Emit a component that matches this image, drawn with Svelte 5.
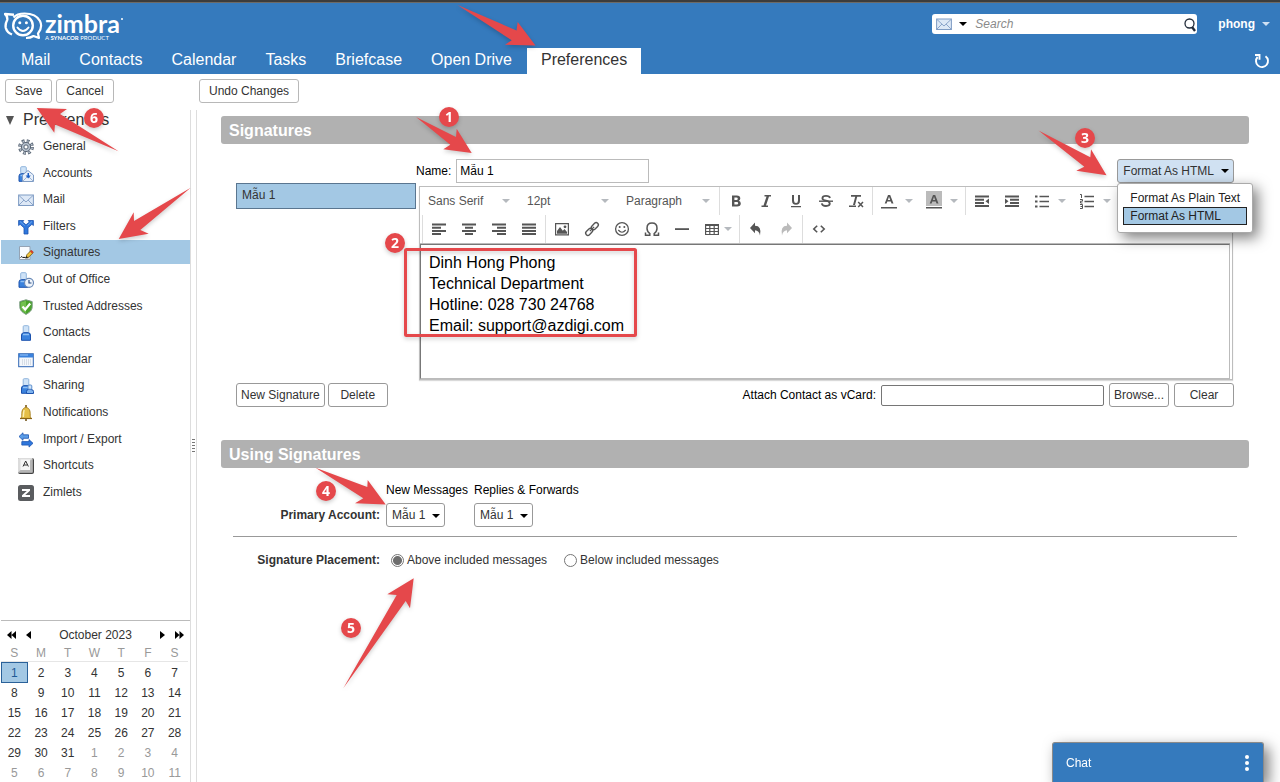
<script>
  const tabs = ['Mail', 'Contacts', 'Calendar', 'Tasks', 'Briefcase', 'Open Drive', 'Preferences'];

  const person = (x = 0) =>
    `<g transform="translate(${x} 0)"><rect x="4.700" y=".7" width="5.600" height="6.800" rx="1" fill="#cfe3f7" stroke="#8fb4dc"/><path d="M3 15.300V10Q3 7.700 5.500 7.700h4Q12 7.700 12 10v5.300z" fill="#3a82dd" stroke="#1c52ad"/><path d="M4.500 9.500h6" stroke="#8fc0f5" stroke-width="1.500"/></g>`;
  const envelope =
    '<rect x=".6" y="3" width="14.800" height="10.500" fill="#dde8f6" stroke="#7f9cc4"/><path d="M1 3.500l7 6.500 7-6.500M1 13l5-5M15 13l-5-5" fill="none" stroke="#8ba5ca"/>';

  const icons = {
    General:
      '<circle cx="8" cy="8" r="6.300" fill="none" stroke="#5a6675" stroke-width="3.200" stroke-dasharray="2.700 2.248"/><circle cx="8" cy="8" r="4.600" fill="#b4bfcc" stroke="#5a6675"/><circle cx="8" cy="8" r="6.200" fill="none" stroke="#b9c3cf" stroke-width="1.600" stroke-dasharray="1.300 3.570" stroke-dashoffset="-.7"/><circle cx="8" cy="8" r="2.100" fill="#fff" stroke="#5a6675"/>',
    Accounts:
      person(-2) +
      '<path d="M4.500 15.500V9L10 4.500 15.500 9v6.500z" fill="#e8f0fa" stroke="#7f9cc4"/><path d="M5 15l4-4M15 15l-4-4" stroke="#9db4d4"/><path d="M9.500 7h1.500v2.500h1.800L10.200 12.500 7.600 9.500h1.900z" fill="#1c5fc4"/>',
    Mail: envelope,
    Filters:
      '<path d="M.6 1.500h5.200L4.600 3 8 5.800 11.400 3l-1.200-1.500h5.200v5L13.900 5.300 10 8.800V15H6V8.800L2.100 5.300.6 6.500z" fill="#2f77dc" stroke="#1d54b0" stroke-width=".8" stroke-linejoin="round"/><path d="M2 2.500l4.500 4M14 2.500L9.500 6.500" stroke="#7db2ee" stroke-width=".8"/>',
    Signatures:
      '<path d="M1.500 1.500h10.500v13H1.500z" fill="#f8fbff" stroke="#94a3b4"/><path d="M2.500 12.500l1.300-1L5 12.800l1-.8 1 .8h3.500" fill="none" stroke="#111"/><path d="M8 12.800l.8-3L13 5.500l2.200 2.200-4.400 4.300z" fill="#f3c53b" stroke="#6b5310" stroke-width=".8"/><path d="M12 6.500l2 2 1.500-1.400-2-2z" fill="#d33c2b"/><path d="M7.800 13l.6-2 1.400 1.400z" fill="#111"/>',
    'Out of Office':
      person(-2) +
      '<circle cx="11" cy="10.800" r="4.500" fill="#f0f5fb" stroke="#6c8cb8" stroke-width="1.200"/><path d="M11 8v3h2.500" fill="none" stroke="#2b4f86" stroke-width="1.200"/>',
    'Trusted Addresses':
      '<path d="M8 .8l6.200 1.800v5c0 3.800-2.800 6-6.200 7.800-3.400-1.800-6.200-4-6.200-7.800v-5z" fill="#4aa32c" stroke="#7b9a84"/><path d="M8 1.800v12.500c-2.800-1.600-5.200-3.500-5.200-6.700V3.400z" fill="#72c04f"/><path d="M4.500 7.500l2.700 3 5-6" fill="none" stroke="#fff" stroke-width="2.200"/>',
    Contacts: person(0.5),
    Calendar:
      '<rect x=".7" y="1.700" width="14.600" height="13" fill="#f4f7fb" stroke="#2f66b5"/><path d="M1 2h14v3.500H1z" fill="#3a82dd"/><path d="M2 3h8" stroke="#9cc6f7"/><path d="M4 8h10M4 10h10M4 12h10" stroke="#b9c4d2" stroke-dasharray="1 1"/>',
    Sharing:
      person(0.5) +
      '<path d="M8.500 15.500v-2q0-2 2-2h2.500q2.500 0 2.500 2v2z" fill="#7db2ee" stroke="#1c52ad"/><rect x="10" y="7" width="3.800" height="4.200" rx="1" fill="#cfe3f7" stroke="#5d90cf"/>',
    Notifications:
      '<path d="M8 0v2.500" stroke="#7d5a13" stroke-width="1.600"/><path d="M2.500 13.500c1.500-1.200 1.300-2.500 1.300-5C3.800 5 5.500 2.500 8 2.500S12.200 5 12.200 8.500c0 2.500-.2 3.800 1.300 5z" fill="#e5bf48" stroke="#a37b1c" stroke-width=".9"/><path d="M6.200 5c-.7 1.500-.7 4-.9 7" stroke="#fbeeb0" fill="none" stroke-width="1.500"/><path d="M2 13.500h12" stroke="#8a6414" stroke-width="1.200"/><path d="M7 15h2" stroke="#6b4c0e" stroke-width="1.600"/>',
    'Import / Export':
      '<path d="M1 4.500L5 .8v2h5.500v3.500H5v2z" fill="#5b9de8" stroke="#1d54b0" stroke-width=".8"/><path d="M15 11.300L11 7.600v2H3.800v3.500H11v2z" fill="#2f77dc" stroke="#1d54b0" stroke-width=".8"/>',
    Shortcuts:
      '<rect width="16" height="16" rx="2" fill="#444"/><path d="M1 0h13.500v14.500H0V1z" fill="#dcdcdc"/><path d="M0 14.500L2.500 12h9.500V2.500L14.500 1v13.500z" fill="#b5b5b5"/><rect x="2.500" y="1.500" width="9.500" height="10.500" fill="#f7f7f7"/><path d="M5 8.500L7.700 3l2.700 5.500M6 7h3.400" fill="none" stroke="#333"/>',
    Zimlets:
      '<rect width="16" height="16" rx="2.500" fill="#5a5c5f"/><path d="M4 4h8v1.800L7.200 10H12v2H4v-1.800L8.800 6H4z" fill="#fff"/>'
  };

  const tool = {
    bold: '<path fill-rule="evenodd" d="M4 2.500h4.800q3.500 0 3.500 3 0 1.600-1.400 2.300 1.900.6 1.900 2.700 0 3-3.700 3H4zM6.400 4.500v2.400h2q1.400 0 1.400-1.200T8.400 4.500zM6.400 8.900v2.700h2.300q1.500 0 1.500-1.400T8.700 8.900z"/>',
    italic: '<path d="M6.500 2H13v1.400h-2L8 12.600h2V14H3.500v-1.400h2l3-9.200h-2z"/>',
    underline: '<path d="M4 2h2v5.500q0 2.500 2 2.500t2-2.500V2h2v5.500Q12 11.800 8 11.800T4 7.500zM3 13h10v1.300H3z"/>',
    strike: '<path d="M1 7.500h14v1.400H1z"/><path d="M12 5Q11.500 2.900 8 2.900T4.400 5.200Q4.400 7 8 7.600t3.800 3Q11.800 13 8 13t-4.200-2.600" fill="none" stroke="currentColor" stroke-width="1.800"/>',
    clear: '<path d="M3 2h10v1.700H9.200L7 12H5l2.200-8.300H3zM1 12.600h7V14H1z"/><path d="M10.200 9l4.800 5M15 9l-4.800 5" stroke="currentColor" stroke-width="1.500"/>',
    color: '<path fill-rule="evenodd" d="M7 2h2.200l3.300 8.500h-2L9.800 8.600H6.300l-.7 1.900H3.700zM6.900 7h2.300L8 3.800zM0 14h16v1.600H0z"/>',
    back: '<path d="M0-2h16v15H0z" fill="#bbb"/><path fill-rule="evenodd" d="M7 2h2.200l3.300 8.500h-2L9.800 8.600H6.300l-.7 1.900H3.700zM6.900 7h2.300L8 3.800zM0 14h16v1.600H0z"/>',
    outdent: '<path d="M1 2.500h14v2H1zM1 5.700h9v2H1zM1 8.900h9v2H1zM1 12.100h14v2H1zM15 5.500v5.600L11.500 8.300z"/>',
    indent: '<path d="M1 2.500h14v2H1zM6 5.700h9v2H6zM6 8.900h9v2H6zM1 12.100h14v2H1zM1 5.500v5.600l3.500-2.800z"/>',
    bullets: '<path d="M1 2.500h2.500v2H1zM1 7.500h2.500v2H1zM1 12.500h2.500v2H1zM5.500 2.700H15v1.600H5.500zM5.500 7.700H15v1.600H5.500zM5.500 12.700H15v1.600H5.500z"/>',
    numbers: '<path d="M5.500 2.700H15v1.600H5.500zM5.500 7.700H15v1.600H5.500zM5.500 12.700H15v1.600H5.500z"/><path d="M1 1.500h1.500V5M1 6.500h2.500v1.700H1.500V10h2M1 11.500h2.500v4H1M1.500 13.500h2" fill="none" stroke="currentColor"/>',
    left: '<path d="M1 2.500h14v2H1zM1 5.700h9v2H1zM1 8.900h14v2H1zM1 12.100h9v2H1z"/>',
    center: '<path d="M1 2.500h14v2H1zM4 5.700h8v2H4zM1 8.900h14v2H1zM4 12.100h8v2H4z"/>',
    right: '<path d="M1 2.500h14v2H1zM6 5.700h9v2H6zM1 8.900h14v2H1zM6 12.100h9v2H6z"/>',
    justify: '<path d="M1 2.500h14v2H1zM1 5.700h14v2H1zM1 8.900h14v2H1zM1 12.100h14v2H1z"/>',
    image: '<path fill-rule="evenodd" d="M1 2h14v12.500H1zM2.200 3.200v10h11.600v-10z"/><path d="M3 12.800V10l3-4 2.800 3.800L10.500 8l2.500 3v1.800z"/><circle cx="11" cy="5.800" r="1.400"/>',
    link: '<g transform="rotate(-45 8 8)" fill="none" stroke="currentColor" stroke-width="1.400"><rect x="0" y="5.800" width="8" height="4.400" rx="2.200"/><rect x="8" y="5.800" width="8" height="4.400" rx="2.200"/><path d="M5 8h6"/></g>',
    smile: '<circle cx="8" cy="8" r="6.400" fill="none" stroke="currentColor" stroke-width="1.300"/><circle cx="5.700" cy="6" r="1"/><circle cx="10.300" cy="6" r="1"/><path d="M4.300 9q3.700 4.500 7.400 0" fill="none" stroke="currentColor" stroke-width="1.200"/>',
    omega: '<path d="M1.500 11.500v2.700h4.300v-1.700Q3 10.500 3 7.200 3 2 8 2t5 5.200q0 3.300-2.800 5.300v1.700h4.300v-2.700" fill="none" stroke="currentColor" stroke-width="1.500"/>',
    rule: '<path d="M1 7.200h14V9H1z"/>',
    table: '<path fill-rule="evenodd" d="M1 3h14v11H1zM2.200 5v2h3V5zM6.400 5v2h3.200V5zM10.800 5v2h3V5zM2.200 8v2h3V8zM6.400 8v2h3.200V8zM10.800 8v2h3V8zM2.200 11v2h3v-2zM6.400 11v2h3.200v-2zM10.800 11v2h3v-2z"/>',
    undo: '<path d="M7 1.500v3.200q7 0 5 9.800-.8-5-5-5.200v3L2 7z"/>',
    redo: '<path d="M9 1.500v3.200q-7 0-5 9.800.8-5 5-5.200v3L14 7z"/>',
    code: '<path d="M6.200 4.700L2.800 8l3.400 3.300M9.800 4.700L13.200 8l-3.400 3.300" fill="none" stroke="currentColor" stroke-width="1.600"/>'
  };

  const fontSelects = [
    { label: 'Font', value: 'Sans Serif', wide: false },
    { label: 'Size', value: '12pt', wide: false },
    { label: 'Block', value: 'Paragraph', wide: true }
  ];
  const rowOne = [
    [['bold', 'Bold'], ['italic', 'Italic'], ['underline', 'Underline'], ['strike', 'Strikethrough'], ['clear', 'Clear formatting']],
    [['color', 'Text color', 'menu'], ['back', 'Background color', 'menu']],
    [['outdent', 'Decrease indent'], ['indent', 'Increase indent'], ['bullets', 'Bullet list', 'menu'], ['numbers', 'Numbered list', 'menu']]
  ];
  const rowTwo = [
    [['left', 'Align left'], ['center', 'Align center'], ['right', 'Align right'], ['justify', 'Justify']],
    [['image', 'Insert image'], ['link', 'Insert link'], ['smile', 'Emoticons'], ['omega', 'Special character'], ['rule', 'Horizontal line'], ['table', 'Table', 'tight']],
    [['undo', 'Undo'], ['redo', 'Redo']],
    [['code', 'Source code']]
  ];

  const weekdays = ['S', 'M', 'T', 'W', 'T', 'F', 'S'];
  const weeks = Array.from({ length: 6 }, (_, w) =>
    Array.from({ length: 7 }, (_, d) => {
      const n = w * 7 + d + 1;
      return { day: n > 31 ? n - 31 : n, other: n > 31 };
    })
  );

  const arrows = [
    '457.5,5 516.500,30.500 517.700,22 535.500,45.500 505,44.700 511.700,40.300',
    '416,117 456,137 456.700,128.700 471.700,153 443.300,149.300 450.300,144.700',
    '36.700,108 67,109 60,114 118.500,151.300 55,124.500 54.300,132.700',
    '118.700,239 133.700,212.300 134,221 190.700,187.700 140.300,230 148.700,233.700',
    '1038.500,130.500 1090.300,157.300 1091,149.300 1106.500,175.300 1076.300,170.700 1084.300,166.700',
    '315.500,467.700 367.300,487 367.700,480 385.700,504.500 355,503.300 363.300,498.300',
    '343.300,688.300 396.700,595 387.300,594.300 413.700,578.300 410,608.300 405.700,601'
  ];
  const badges = [
    [449, 117], [395, 243], [1085, 138], [326, 491], [351, 628], [94, 118]
  ];

  let placement = $state('above');
</script>

{#snippet toolbarGroup(items)}
  <div class="group">
    {#each items as [id, title, menu]}
      <button class="tool" class:dim={id === 'redo'} aria-label={title}>
        <svg width="16" height="16" viewBox="0 0 16 16" fill="currentColor" overflow="visible">{@html tool[id]}</svg>
      </button>
      {#if menu}
        <button class="drop" class:tight={menu === 'tight'} aria-label="{title} options"><span class="caret pale"></span></button>
      {/if}
    {/each}
  </div>
{/snippet}

<div class="app">
  <header>
    <div class="brand-row">
      <a class="logo" href="#home" aria-label="Zimbra">
        <svg width="39" height="28" viewBox="0 0 39 28" fill="none" stroke="#fff">
          <path d="M10 2.800L1 2Q3.800 4.500 3.200 8 1 12 1.800 16q1.200 4.500 6.200 6.500" stroke-width="2.400" stroke-linejoin="round" />
          <path d="M9.500 5.500Q13 1.500 20.500 1.500 32 1.500 36 9q3 6.500-2 12.500l1 4.500-5.500-2Q26.500 26 22 26" stroke-width="2.200" stroke-linejoin="round" />
          <circle cx="19" cy="13.500" r="9.800" stroke-width="2.400" />
          <path d="M13.500 15.500q5.500 7 11 0" stroke-width="2" stroke-linecap="round" />
          <circle cx="15.800" cy="10.800" r="1.500" fill="#fff" stroke="none" />
          <circle cx="22.400" cy="10.800" r="1.500" fill="#fff" stroke="none" />
        </svg>
        <span class="wordmark"><b>zimbra</b><small>A <strong>SYNACOR</strong> PRODUCT</small></span>
        <span class="mark"></span>
      </a>
      <div class="account">
        <form class="search" onsubmit={(e) => e.preventDefault()}>
          <button type="button" class="scope" aria-label="Search in mail">
            <svg width="16" height="16" viewBox="0 0 16 16">{@html envelope}</svg>
            <span class="caret"></span>
          </button>
          <input aria-label="Search" placeholder="Search" />
          <button class="go" aria-label="Run search">
            <svg width="14" height="14" viewBox="0 0 14 14" fill="none" stroke="#222c3a"><circle cx="6.500" cy="5.500" r="4.500" stroke-width="1.300" /><path d="M9 9l3 4" stroke-width="2.400" /></svg>
          </button>
        </form>
        <button class="user">phong <span class="caret light"></span></button>
      </div>
    </div>
    <div class="nav-row">
      <nav>
        {#each tabs as tab}
          <a href="#{tab}" class:active={tab === 'Preferences'}>{tab}</a>
        {/each}
      </nav>
      <button class="refresh" aria-label="Refresh">
        <svg width="16" height="16" viewBox="0 0 16 16" fill="none" stroke="#fff" stroke-width="1.900"><path d="M11.500 3.200A6 6 0 1 1 3.600 4" /><path d="M1 2h4.500v4.800" /></svg>
      </button>
    </div>
  </header>

  <div class="actions">
    <div class="save-pair"><button class="btn">Save</button><button class="btn">Cancel</button></div>
    <button class="btn">Undo Changes</button>
  </div>

  <div class="body">
    <aside>
      <section class="tree">
        <h2><span class="twisty"></span>Preferences</h2>
        <ul>
          {#each Object.keys(icons) as name}
            <li>
              <a href="#{name}" class:selected={name === 'Signatures'}>
                <svg width="16" height="16" viewBox="0 0 16 16">{@html icons[name]}</svg>{name}
              </a>
            </li>
          {/each}
        </ul>
      </section>
      <section class="calendar">
        <div class="month">
          <button aria-label="Previous year"><svg width="9" height="8" viewBox="0 0 9 8"><path d="M4.500 0v8L0 4zM9 0v8L4.500 4z" /></svg></button>
          <button aria-label="Previous month"><svg width="5" height="8" viewBox="0 0 5 8"><path d="M5 0v8L0 4z" /></svg></button>
          <span>October 2023</span>
          <button aria-label="Next month"><svg width="5" height="8" viewBox="0 0 5 8"><path d="M0 0v8l5-4z" /></svg></button>
          <button aria-label="Next year"><svg width="9" height="8" viewBox="0 0 9 8"><path d="M0 0v8l4.500-4zM4.500 0v8L9 4z" /></svg></button>
        </div>
        <table>
          <thead><tr>{#each weekdays as d}<th>{d}</th>{/each}</tr></thead>
          <tbody>
            {#each weeks as week, w}
              <tr>{#each week as c, d}<td class:other={c.other} class:today={w === 0 && d === 0}>{c.day}</td>{/each}</tr>
            {/each}
          </tbody>
        </table>
      </section>
    </aside>

    <div class="splitter"><span></span></div>

    <main>
      <h1>Signatures</h1>
      <div class="signatures">
        <div class="name-row">
          <label for="sig-name">Name:</label>
          <input id="sig-name" value="Mẫu 1" />
          <div class="format">
            <button class="btn open" aria-haspopup="menu" aria-expanded="true">Format As HTML <span class="caret"></span></button>
            <div class="menu" role="menu">
              <button role="menuitem">Format As Plain Text</button>
              <button role="menuitem" class="current">Format As HTML</button>
            </div>
          </div>
        </div>
        <div class="edit-row">
          <ul class="sig-list"><li><button>Mẫu 1</button></li></ul>
          <div class="editor">
            <div class="tools">
              <div class="tool-row">
                <div class="group first">
                  {#each fontSelects as s}
                    <span class="pick" class:wide={s.wide}>
                      <select aria-label={s.label}><option>{s.value}</option></select>
                      <span class="caret pale"></span>
                    </span>
                  {/each}
                </div>
                {#each rowOne as items}{@render toolbarGroup(items)}{/each}
              </div>
              <div class="tool-row second">
                {#each rowTwo as items}{@render toolbarGroup(items)}{/each}
              </div>
            </div>
            <div class="content" contenteditable="true" role="textbox" tabindex="0" aria-label="Signature text" spellcheck="false">
              <div>Dinh Hong Phong</div>
              <div>Technical Department</div>
              <div>Hotline: 028 730 24768</div>
              <div>Email: support@azdigi.com</div>
            </div>
          </div>
        </div>
        <div class="foot-row">
          <button class="btn snug">New Signature</button>
          <button class="btn snug">Delete</button>
          <div class="vcard">
            <label for="vcard">Attach Contact as vCard:</label>
            <input id="vcard" />
            <button class="btn snug">Browse...</button>
            <button class="btn snug">Clear</button>
          </div>
        </div>
      </div>

      <h1>Using Signatures</h1>
      <div class="using">
        <div class="using-grid">
          <span></span>
          <label for="new-msg">New Messages</label>
          <label for="reply-msg">Replies &amp; Forwards</label>
          <strong>Primary Account:</strong>
          <span class="choose"><select id="new-msg"><option>Mẫu 1</option></select><span class="caret"></span></span>
          <span class="choose"><select id="reply-msg"><option>Mẫu 1</option></select><span class="caret"></span></span>
        </div>
        <hr />
        <div class="placement">
          <strong>Signature Placement:</strong>
          <label><input type="radio" name="placement" value="above" bind:group={placement} />Above included messages</label>
          <label><input type="radio" name="placement" value="below" bind:group={placement} />Below included messages</label>
        </div>
      </div>
    </main>
  </div>

  <button class="chat">
    <span>Chat</span>
    <svg width="6" height="16" viewBox="0 0 6 16" fill="#fff"><circle cx="3" cy="2" r="2" /><circle cx="3" cy="8" r="2" /><circle cx="3" cy="14" r="2" /></svg>
  </button>

  <svg class="callouts" aria-hidden="true">
    <rect x="405.500" y="249.500" width="230" height="86" rx="1" fill="none" stroke="#e5484b" stroke-width="3" />
    {#each arrows as points}
      <polygon {points} fill="#e5484b" />
    {/each}
    {#each badges as [x, y], i}
      <circle cx={x} cy={y} r="10" fill="#e5484b" />
      <text {x} y={y + 5} text-anchor="middle">{i + 1}</text>
    {/each}
  </svg>
</div>

<style>
  :global(body) { margin: 0; }
  .app {
    position: relative;
    display: flex;
    flex-direction: column;
    min-height: 100vh;
    background: #fff;
    color: #333;
    font: 12px/16px "Liberation Sans", Arial, sans-serif;
  }
  .app :where(button, input, select) {
    margin: 0;
    box-sizing: border-box;
    font: inherit;
    color: inherit;
  }
  .app :where(button) { padding: 0; border: 0; background: none; white-space: nowrap; }
  .app :where(svg) { display: block; flex: none; }
  ul { margin: 0; padding: 0; list-style: none; }
  a { color: inherit; text-decoration: none; }

  .caret {
    flex: none;
    width: 0;
    height: 0;
    border: 4px solid transparent;
    border-top: 4px solid #000;
    border-bottom: 0;
  }
  .caret.light { border-top-color: #cfe0f3; }
  .caret.pale { border-top-color: #b5b9be; }

  header { background: #357abd; border-top: 2px solid #3c3c3c; box-shadow: inset 0 1px #6c6a66; }
  .brand-row { display: flex; align-items: flex-start; justify-content: space-between; height: 46px; }
  .logo { display: flex; gap: 2px; padding: 10px 0 0 4px; color: #fff; }
  .wordmark { display: flex; flex-direction: column; font-family: Lato, sans-serif; }
  .wordmark b { font-size: 25px; line-height: 22px; font-weight: 700; }
  .wordmark small { padding-top: 1px; font-size: 6px; line-height: 6px; }
  .mark { align-self: flex-start; width: 2px; height: 2px; margin: 6px 0 0 -1px; border-radius: 50%; background: #fff; }
  .account { display: flex; align-items: center; padding: 12px 10px 0 0; }
  .search { display: flex; align-items: center; width: 265px; height: 20px; background: #fff; border-radius: 3px; }
  .search .scope { display: flex; align-items: center; gap: 7px; padding-left: 4px; }
  .search input { flex: 1; min-width: 0; height: 18px; padding: 0 8px; border: 0; outline: 0; background: none; font-style: italic; }
  .search input::placeholder { color: #8a8a8a; opacity: 1; }
  .go { padding: 1px 0 0; }
  .user { display: flex; align-items: center; gap: 7px; padding-left: 21px; color: #fff; font-weight: bold; }
  .nav-row { display: flex; align-items: stretch; justify-content: space-between; height: 26px; padding: 0 10px 0 7px; }
  nav { display: flex; gap: 1px; font-size: 16px; line-height: 24px; color: #fff; }
  nav a { padding: 0 14px 2px; white-space: nowrap; }
  nav a.active { background: #fff; color: #333; }

  .actions { display: flex; padding: 5px 5px 7px; }
  .save-pair { display: flex; gap: 4px; width: 194px; }
  .btn {
    height: 24px;
    padding: 0 9px;
    border: 1px solid #b8b8b8;
    border-radius: 3px;
    background: #fff;
    color: #333;
  }
  .btn.snug { min-width: 60px; padding: 0 4px; border-color: #999; }

  .body { display: flex; flex: 1; }
  aside { display: flex; flex-direction: column; justify-content: space-between; flex: none; width: 190px; }
  .tree h2 { display: flex; align-items: center; gap: 9px; margin: 0 0 4px; padding-left: 6px; font-size: 16px; line-height: 20px; font-weight: normal; }
  .twisty { border: 4px solid transparent; border-top: 9px solid #555; border-bottom: 0; }
  .tree ul { display: flex; flex-direction: column; justify-content: space-between; height: 370px; }
  .tree li { padding-left: 1px; }
  .tree a { display: flex; align-items: center; gap: 9px; height: 24px; padding-left: 17px; }
  .tree a svg { margin-top: 2px; }
  .tree a.selected { background: #a3c8e4; }

  .calendar { padding-left: 1px; }
  .month { display: flex; align-items: center; height: 24px; padding: 5px 6px 0; border-top: 1px solid #bbb; box-sizing: border-box; gap: 10px; }
  .month span { flex: 1; text-align: center; }
  table { width: 187px; border-collapse: collapse; table-layout: fixed; text-align: center; }
  th { height: 16px; padding: 1px 0 0; border-bottom: 1px solid #e6e6e6; font-weight: normal; color: #999; }
  td { height: 20px; padding: 0; line-height: 16px; }
  tbody tr:first-child td { height: 21px; }
  tbody tr:last-child td { height: 19px; }
  td.other { color: #999; }
  td.today { background: #a3c8e4; box-shadow: inset 0 0 0 1px #2a6199; color: #1f5a96; }

  .splitter { display: flex; align-items: center; justify-content: center; flex: none; width: 5px; border: 1px solid #ddd; border-width: 0 1px; }
  .splitter span { width: 3px; height: 14px; background: repeating-linear-gradient(#777 0 1px, transparent 1px 3px); }

  main { flex: 1; min-width: 0; padding: 6px 31px 0 24px; }
  h1 { margin: 0; padding: 1px 0 0 8px; border-radius: 3px; background: #b1b1b1; color: #fff; font-size: 16px; line-height: 27px; font-weight: bold; }
  .signatures { padding: 15px 15px 33px; }
  .name-row { display: flex; align-items: center; padding-left: 180px; color: #000; }
  .name-row label { margin-right: 5px; }
  .name-row input { width: 193px; height: 24px; padding: 0 3px; border: 1px solid #bbb; }
  .format { position: relative; margin-left: auto; }
  .btn.open { display: flex; align-items: center; gap: 7px; padding: 0 4px 0 5px; border-color: #999; background: #d0e1f2; }
  .menu {
    position: absolute;
    z-index: 2;
    top: 24px;
    left: 0;
    display: flex;
    flex-direction: column;
    padding: 5px 5px 7px;
    border: 1px solid #aaa;
    border-radius: 3px;
    background: #fff;
    box-shadow: 5px 5px 14px rgba(0, 0, 0, 0.5);
  }
  .menu button { height: 18px; padding: 0 6px; border: 1px solid transparent; text-align: left; color: #222; }
  .menu button.current { background: #a3c8e4; border-color: #222; }

  .edit-row { display: flex; align-items: flex-start; gap: 3px; }
  .sig-list { flex: none; width: 180px; }
  .sig-list button { width: 100%; height: 26px; padding: 0 5px 2px; border: 1px solid #5a7690; background: #a3c8e4; text-align: left; }
  .editor { flex: 1; min-width: 0; margin: 3px 1px 3px 0; border: 1px solid #bdbdbd; padding-right: 2px; box-shadow: 0 1px 1px rgba(0, 0, 0, 0.15); box-sizing: border-box; height: 194px; display: flex; flex-direction: column; }
  .tools { color: #555; }
  .tool-row { display: flex; height: 28px; overflow: hidden; }
  .tool-row.second { padding-left: 2px; border-bottom: 1px solid #bbb; }
  .group { display: flex; align-items: center; flex: none; padding: 0 1px; border-left: 1px solid #ddd; }
  .group.first { border: 0; padding: 0; }
  .pick { position: relative; width: 99px; height: 28px; }
  .pick.wide { width: 101px; }
  .pick select { appearance: none; width: 100%; height: 28px; padding: 0 24px 0 8px; border: 0; background: none; }
  .pick .caret { position: absolute; right: 9px; top: 12px; pointer-events: none; }
  .tool { display: flex; align-items: center; justify-content: center; width: 30px; height: 28px; }
  .tool.dim { color: #bbb; }
  .drop { display: flex; align-items: center; width: 15px; height: 28px; padding-left: 1px; }
  .drop.tight { width: 15px; margin-left: -4px; }
  .content { flex: 1; padding: 7px 8px; border: 1px solid #777; border-right-color: #bbb; border-bottom-color: #bbb; outline: 0; color: #000; font-size: 16px; line-height: 21px; }

  .foot-row { display: flex; gap: 3px; }
  .vcard { display: flex; align-items: center; gap: 5px; margin-left: auto; color: #000; }
  .vcard input { width: 223px; height: 21px; border: 1px solid #767676; border-radius: 2px; }

  .using { padding: 14px 12px 0; }
  .using-grid { display: grid; grid-template-columns: 147px 82px auto; justify-content: start; align-items: center; gap: 5px 6px; }
  .using-grid label { color: #000; white-space: nowrap; }
  .using strong { text-align: right; }
  .choose { position: relative; width: 59px; }
  .choose select { display: block; appearance: none; width: 100%; height: 24px; padding: 0 5px; border: 1px solid #999; border-radius: 3px; background: #fff; }
  .choose .caret { position: absolute; right: 5px; top: 11px; pointer-events: none; }
  hr { margin: 9px 0 15px; border: 0; border-top: 1px solid #999; }
  .placement { display: flex; align-items: center; }
  .placement strong { width: 147px; }
  .placement label { display: flex; align-items: center; gap: 3px; margin-left: 11px; }
  .placement label + label { margin-left: 17px; }
  .placement input { appearance: none; width: 13px; height: 13px; border: 1px solid #767676; border-radius: 50%; background: #fff; }
  .placement input:checked { background: radial-gradient(circle, #6e6e6e 4px, #fff 5px); }

  .app .chat {
    position: fixed;
    right: 16px;
    bottom: 0;
    display: flex;
    align-items: center;
    justify-content: space-between;
    width: 212px;
    height: 40px;
    padding: 0 13px;
    border: 1px solid #8a8a8a;
    border-bottom: 0;
    border-radius: 3px 3px 0 0;
    background: #357abd;
    color: #fff;
    box-shadow: 5px 5px 14px rgba(0, 0, 0, 0.5);
  }
  .callouts { position: absolute; inset: 0; z-index: 3; width: 100%; height: 100%; pointer-events: none; filter: drop-shadow(0 2px 2px rgba(0, 0, 0, 0.2)); }
  .callouts text { fill: #fff; font: bold 14px/14px "Open Sans", sans-serif; }
</style>
